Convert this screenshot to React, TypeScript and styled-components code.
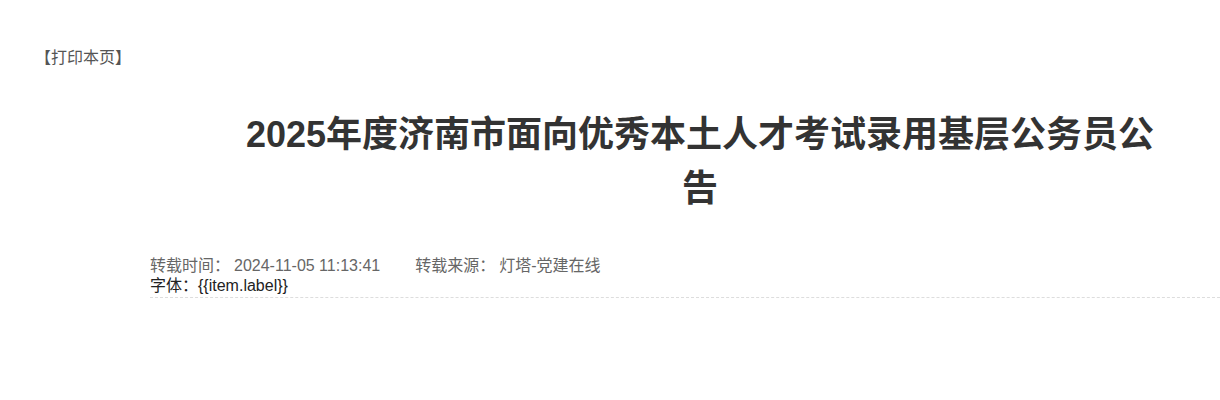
import React from "react";
import styled, { createGlobalStyle } from "styled-components";

const GlobalStyle = createGlobalStyle`
    html, body {
        margin     : 0;
        padding    : 0;
        background : #fff;
        overflow-x : hidden;
    }

    body {
        font-family : "Liberation Sans", "Noto Sans CJK SC", sans-serif;
        color       : #333;
    }
`;

const Page = styled.div`
    display        : flex;
    flex-direction : column;
`;

const PrintBar = styled.div`
    padding     : 48px 35px 0;
    font-size   : 16px;
    line-height : 20px;
`;

const PrintLink = styled.a`
    color           : #555;
    text-decoration : none;
    cursor          : pointer;
`;

const Article = styled.div`
    margin-left : 150px;
`;

const Title = styled.h1`
    width       : 920px;
    margin      : 40px 0 40px 90px;
    font-size   : 36px;
    line-height : 54px;
    font-weight : bold;
    text-align  : center;
    color       : #333;
`;

const Meta = styled.div`
    display        : flex;
    flex-direction : column;
    font-size      : 16px;
    line-height    : 20px;
    padding-bottom : 1px;
    border-bottom  : 1px dashed #ddd;
`;

const MetaRow = styled.div<{ $dark?: boolean }>`
    display : flex;
    color   : ${p => (p.$dark ? "#222" : "#666")};
`;

const MetaItem = styled.span`
    margin-right : 35px;
`;

const MetaValue = styled.span`
    margin-left : 4px;
`;

const App = () => {
    return (
        <>
            <GlobalStyle />
            <Page>
                <PrintBar>
                    <PrintLink>【打印本页】</PrintLink>
                </PrintBar>
                <Article>
                    <Title>2025年度济南市面向优秀本土人才考试录用基层公务员公告</Title>
                    <Meta>
                        <MetaRow>
                            <MetaItem>
                                转载时间：<MetaValue>2024-11-05 11:13:41</MetaValue>
                            </MetaItem>
                            <MetaItem>
                                转载来源：<MetaValue>灯塔-党建在线</MetaValue>
                            </MetaItem>
                        </MetaRow>
                        <MetaRow $dark>
                            <span>字体：{"{{item.label}}"}</span>
                        </MetaRow>
                    </Meta>
                </Article>
            </Page>
        </>
    );
};

export default App;
